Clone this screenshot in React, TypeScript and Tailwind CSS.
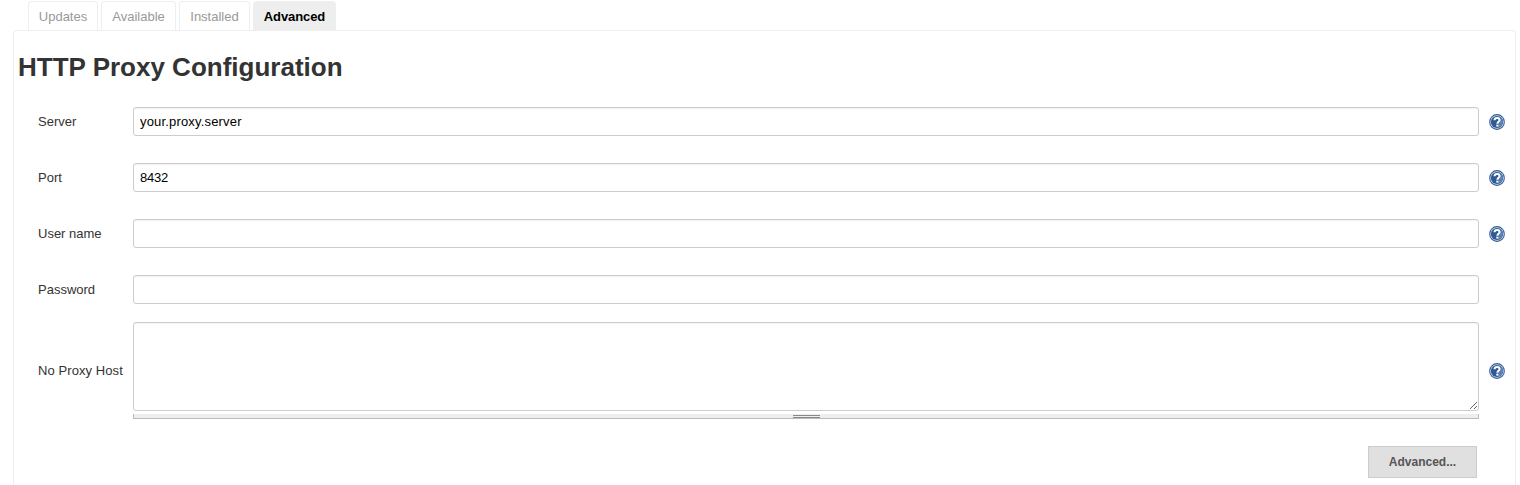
import React from "react";

const HelpIcon = () => (
  <svg width="16" height="16" viewBox="0 0 16 16" className="block shrink-0">
    <circle cx="8" cy="8" r="7.9" fill="#355f9c" />
    <circle cx="8" cy="8" r="6.8" fill="#d3dfee" />
    <circle cx="8" cy="8" r="6.1" fill="#30598f" />
    <path d="M8 1.900a6.100 6.100 0 0 1 6.100 6.100c0 3.100-2.400 5.800-5.400 6.100L12 4z" fill="#5b80b3" />
    <path d="M5.500 6.300C5.600 4.600 6.700 3.900 8.100 3.900c1.500 0 2.500.8 2.500 2.100 0 1.700-2.200 1.900-2.200 3.700" fill="none" stroke="#fff" strokeWidth="2" />
    <rect x="7.300" y="10.600" width="2.200" height="2" fill="#fff" />
  </svg>
);

const tabs = [
  { name: "Updates", width: "w-[70px]" },
  { name: "Available", width: "w-[75px]" },
  { name: "Installed", width: "w-[71px]" },
];

const fields = [
  { label: "Server", value: "your.proxy.server", type: "text", help: true, spacing: "tracking-[0.17px]" },
  { label: "Port", value: "8432", type: "text", help: true, spacing: "tracking-[-0.2px]" },
  { label: "User name", value: "", type: "text", help: true, spacing: "" },
  { label: "Password", value: "", type: "password", help: false, spacing: "" },
];

export default function App() {
  return (
    <div className="flex h-[485px] w-[1520px] flex-col overflow-hidden bg-white pt-px pr-1 pl-[13px] font-['Liberation_Sans',Arial,sans-serif] text-[13px] text-[#333]">
      <nav className="flex h-[29px] shrink-0 gap-[3px] pl-[15px] leading-[30px]">
        {tabs.map((t) => (
          <a key={t.name} className={`${t.width} rounded-t-[4px] border border-b-0 border-[#eee] text-center text-[#999]`}>
            {t.name}
          </a>
        ))}
        <a className="w-[83px] rounded-t-[4px] bg-[#eee] pt-px text-center font-bold tracking-[-0.1px] text-black">Advanced</a>
      </nav>
      <main className="flex min-h-0 flex-1 flex-col rounded-t-[4px] border border-b-0 border-[#eee] pl-1">
        <h1 className="mt-5 h-8 shrink-0 text-[26px] leading-8 font-bold">HTTP Proxy Configuration</h1>
        <div className="mt-6 flex shrink-0 flex-col gap-[27px] pl-5">
          {fields.map((f) => (
            <label key={f.label} className="flex h-[29px] items-center">
              <span className="w-[95px]">{f.label}</span>
              <input
                type={f.type}
                defaultValue={f.value}
                className={`${f.spacing} h-[29px] w-[1346px] rounded-[3px] border border-[#ccc] px-1.5 text-black shadow-[inset_0_1px_1px_rgba(0,0,0,0.05)] outline-none`}
              />
              <span className="ml-2.5">{f.help && <HelpIcon />}</span>
            </label>
          ))}
        </div>
        <div className="mt-[18px] flex h-[97px] shrink-0 items-center pl-5">
          <span className="w-[95px] tracking-[0.08px] whitespace-nowrap">No Proxy Host</span>
          <div className="flex h-[97px] w-[1346px] flex-col">
            <textarea className="block h-[89px] w-full resize rounded-[3px] border border-[#ccc] shadow-[inset_0_1px_1px_rgba(0,0,0,0.05)] outline-none" />
            <div className="mt-[3px] flex h-[5px] justify-center border-x border-b border-[#bbb] bg-[#eee]">
              <div className="mt-px h-[3px] w-[27px] border-y border-[#888]" />
            </div>
          </div>
          <span className="ml-2.5"><HelpIcon /></span>
        </div>
        <div className="mt-[27px] flex shrink-0 justify-end pr-[38px]">
          <button className="h-8 w-[109px] border border-[#ccc] bg-[#e0e0e0] text-[12px] font-bold text-[#555]">Advanced...</button>
        </div>
      </main>
    </div>
  );
}
